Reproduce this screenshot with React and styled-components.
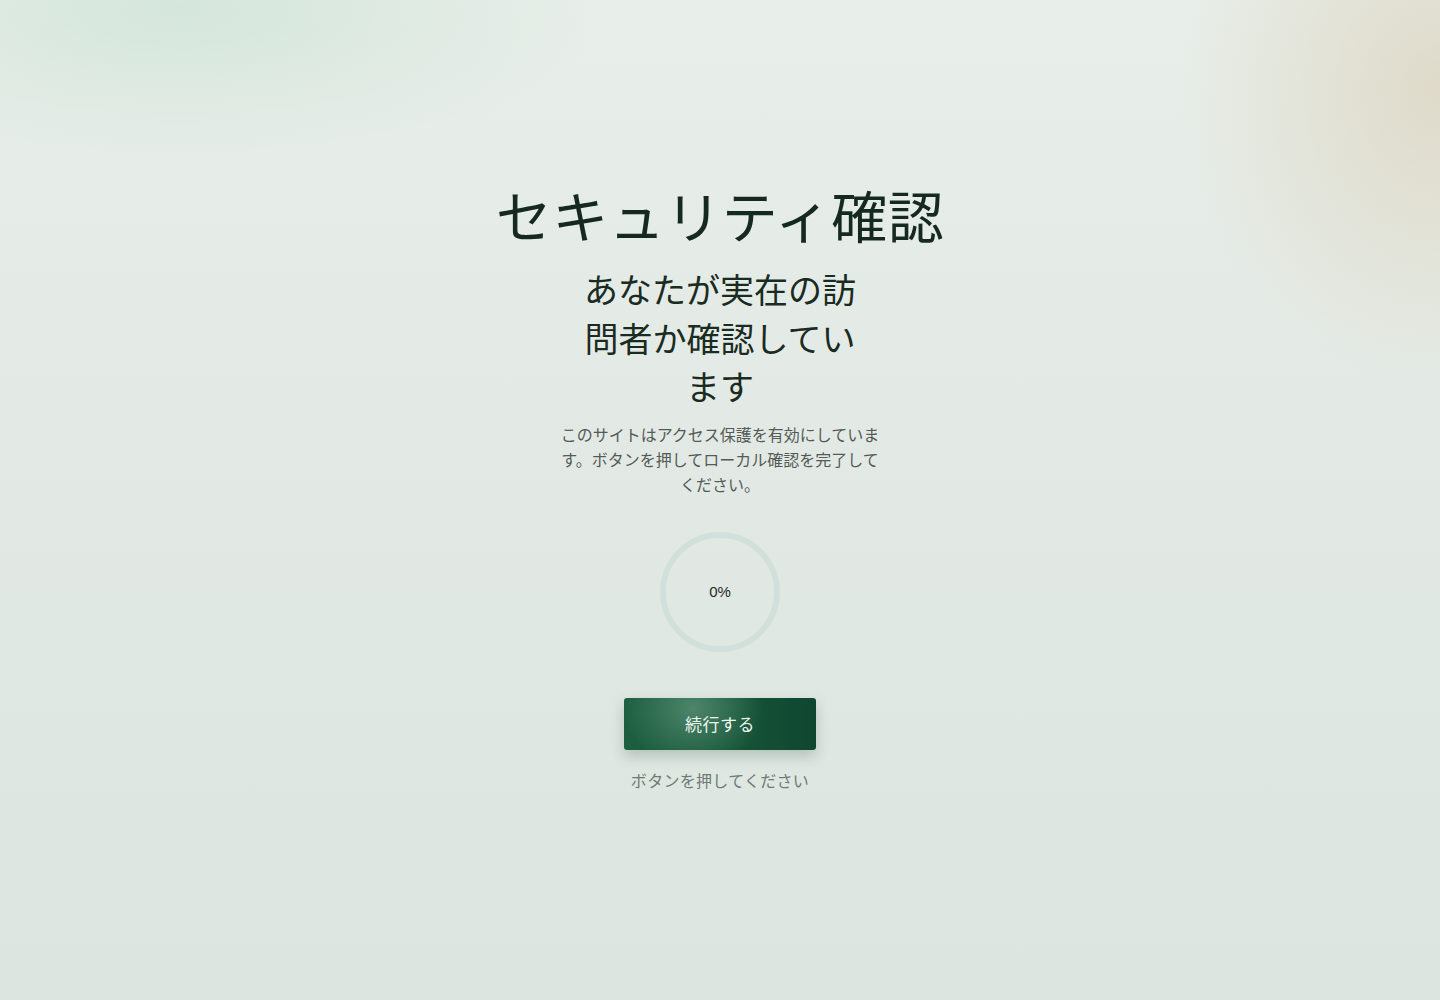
import React from 'react'
import styled, { createGlobalStyle } from 'styled-components'

const GlobalStyle = createGlobalStyle`
  html, body {
    margin: 0;
    padding: 0;
  }
  body {
    font-family: "Noto Sans CJK JP", "Noto Sans", sans-serif;
    background: #e3eae5;
  }
`

const Page = styled.main`
  min-height: 100vh;
  box-sizing: border-box;
  display: flex;
  flex-direction: column;
  align-items: center;
  justify-content: center;
  padding-bottom: 28px;
  background:
    radial-gradient(ellipse 420px 150px at 180px 10px, rgba(202, 226, 212, 0.65), rgba(202, 226, 212, 0) 100%),
    radial-gradient(ellipse 260px 300px at 1440px 90px, rgba(222, 216, 198, 0.9), rgba(222, 216, 198, 0) 100%),
    linear-gradient(180deg, #e8eee9 0%, #e2e9e4 50%, #dce5df 100%);
`

const Title = styled.h1`
  margin: 0;
  font-size: 56px;
  line-height: 67px;
  font-weight: 400;
  color: #16291f;
  letter-spacing: 0.5px;
`

const Subtitle = styled.h2`
  margin: 18px 0 0;
  width: 280px;
  text-align: center;
  font-size: 34px;
  line-height: 48.5px;
  font-weight: 400;
  color: #1a2b22;
`

const Description = styled.p`
  margin: 11px 0 0;
  width: 324px;
  text-align: center;
  font-size: 16px;
  line-height: 25px;
  color: #535b57;
`

const Ring = styled.div`
  margin-top: 35px;
  width: 120px;
  height: 120px;
  box-sizing: border-box;
  border-radius: 50%;
  border: 6px solid #d2e0dc;
  display: flex;
  align-items: center;
  justify-content: center;
  font-family: "Liberation Sans", Arial, sans-serif;
  font-size: 15px;
  color: #1f2a25;
`

const Button = styled.button`
  margin-top: 46px;
  width: 192px;
  height: 52px;
  border: none;
  border-radius: 3px;
  cursor: pointer;
  font-family: inherit;
  font-size: 17px;
  color: #eef5f1;
  letter-spacing: 0.5px;
  background:
    radial-gradient(ellipse 70px 60px at 36% 20%, rgba(120, 170, 145, 0.55), rgba(120, 170, 145, 0) 100%),
    linear-gradient(90deg, #1d5e41 0%, #175739 50%, #0f4630 100%);
  box-shadow: 0 6px 14px rgba(20, 60, 40, 0.22);
`

const Hint = styled.p`
  margin: 18px 0 0;
  font-size: 16px;
  line-height: 24px;
  color: #6f7b77;
  letter-spacing: 0.3px;
`

export default function App() {
  return (
    <>
      <GlobalStyle />
      <Page>
        <Title>セキュリティ確認</Title>
        <Subtitle>あなたが実在の訪問者か確認しています</Subtitle>
        <Description>
          このサイトはアクセス保護を有効にしています。ボタンを押してローカル確認を完了してください。
        </Description>
        <Ring>0%</Ring>
        <Button type="button">続行する</Button>
        <Hint>ボタンを押してください</Hint>
      </Page>
    </>
  )
}
